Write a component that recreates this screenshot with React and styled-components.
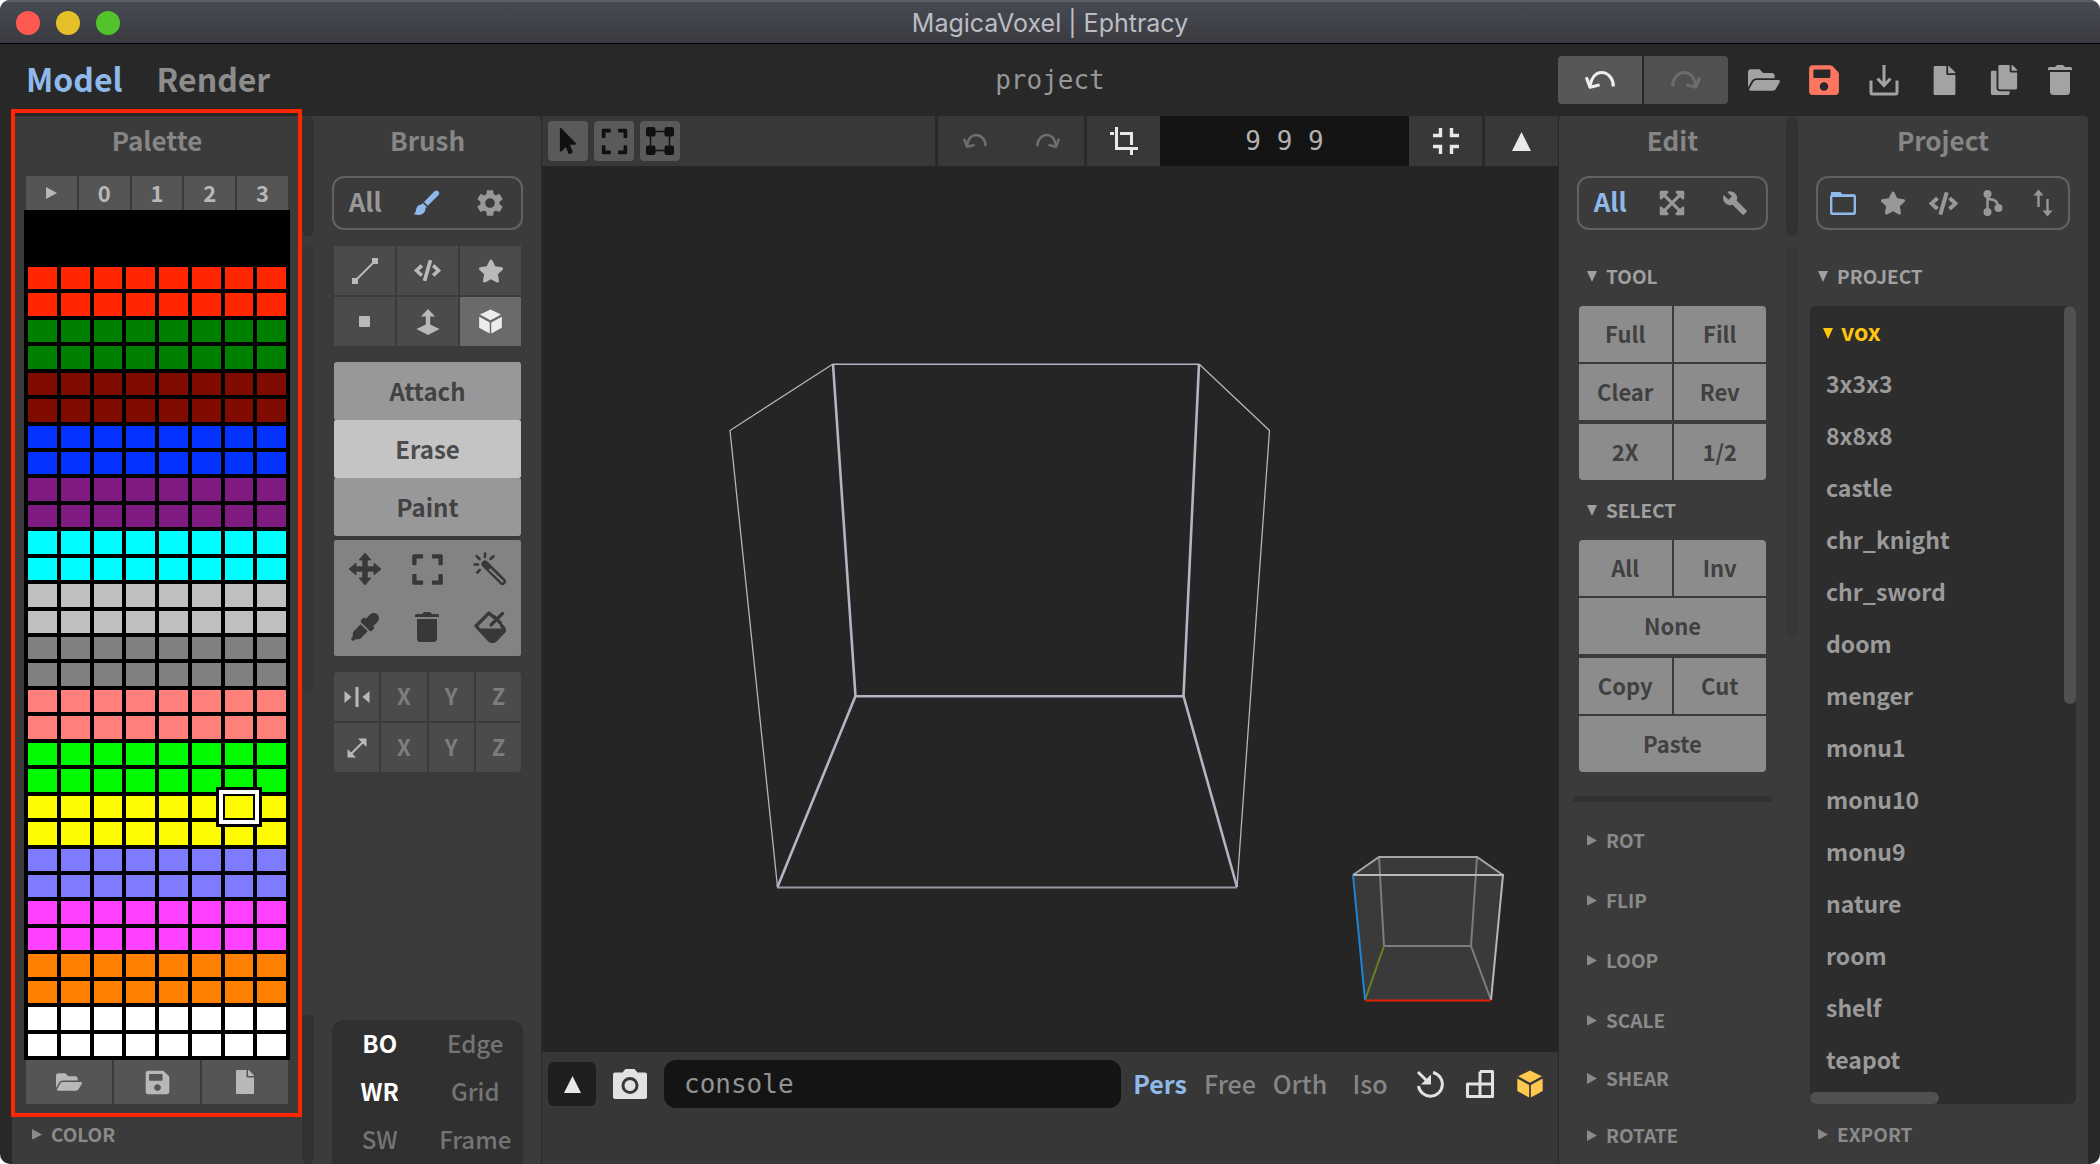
import React, { useState } from "react";
import styled, { createGlobalStyle, css } from "styled-components";
import {
  FaFolderOpen,
  FaSave,
  FaFile,
  FaCopy,
  FaMousePointer,
  FaExpand,
  FaCode,
  FaStar,
  FaEyeDropper,
  FaExpandArrowsAlt,
} from "react-icons/fa";
import { MdSettings, MdBuild } from "react-icons/md";

const SANS = `"Noto Sans CJK SC", "Open Sans", sans-serif`;
const MONO = `"DejaVu Sans Mono", "Liberation Mono", monospace`;

const GlobalStyle = createGlobalStyle`
  *, *::before, *::after { box-sizing: border-box; }
  body { margin: 0; background: #fff; }
  button, input { font: inherit; color: inherit; margin: 0; padding: 0; border: 0; background: none; }
  h1, h2, ul { margin: 0; padding: 0; font: inherit; list-style: none; }
  svg { display: block; flex: none; }
`;

/* ---------- window ---------- */

const Window = styled.div`
  display: flex;
  flex-direction: column;
  min-height: 100vh;
  border-radius: 10px;
  overflow: hidden;
  background: #282828;
  color: #8c8c8c;
  font-family: ${SANS};
  font-weight: 700;
  font-size: 22px;
`;

const TitleBar = styled.div`
  display: grid;
  grid-template-columns: 1fr auto 1fr;
  align-items: center;
  height: 44px;
  padding: 0 16px;
  background: linear-gradient(#474a53, #3a3b40);
  border-top: 2px solid #5c5f68;
  border-bottom: 1px solid #000;
`;

const Lights = styled.div`
  display: flex;
  gap: 16px;
`;

const Light = styled.button`
  width: 24px;
  height: 24px;
  border-radius: 50%;
  background: ${(p) => p.$color};
`;

const WindowTitle = styled.h1`
  font: 400 25px/40px Inter, Roboto, sans-serif;
  color: #bcbdc3;
`;

const Header = styled.header`
  display: grid;
  grid-template-columns: 1fr auto 1fr;
  align-items: center;
  height: 72px;
  padding: 0 14px;
`;

const Modes = styled.nav`
  display: flex;
  gap: 34px;
  padding-left: 12px;
`;

const ModeButton = styled.button`
  height: 48px;
  padding-bottom: 4px;
  font-size: 32px;
  line-height: 44px;
  color: ${(p) => (p.$active ? "#8fb9ea" : "#8c8c8c")};
`;

const ProjectName = styled.div`
  font: 400 26px/48px ${MONO};
  color: #969696;
`;

const HeaderTools = styled.div`
  display: flex;
  justify-content: flex-end;
  align-items: center;
`;

const History = styled.div`
  display: flex;
  gap: 2px;
  margin-right: 6px;
  border-radius: 4px;
  overflow: hidden;
`;

const HistoryButton = styled.button`
  display: grid;
  place-items: center;
  width: 84px;
  height: 48px;
  background: ${(p) => (p.$enabled ? "#575757" : "#505050")};
  color: ${(p) => (p.$enabled ? "#ededed" : "#6c6c6c")};
`;

const IconButton = styled.button`
  display: grid;
  place-items: center;
  width: ${(p) => p.$w || 60}px;
  height: 48px;
  color: ${(p) => p.$color || "#a3a3a3"};
`;

const Body = styled.main`
  flex: 1;
  display: flex;
  gap: 1px;
  padding: 0 12px;
`;

const Dock = styled.div`
  display: flex;
  flex: none;
  background: #3b3b3b;
  border-radius: 4px 4px 0 0;
`;

/* ---------- scroll tracks between panels ---------- */

const Track = styled.div`
  display: flex;
  flex-direction: column;
  gap: 10px;
  width: 12px;
`;

const TrackPart = styled.div`
  height: ${(p) => p.$h}px;
  border-radius: 6px;
  background: ${(p) => (p.$dim ? "#373737" : "#323232")};
  ${(p) => p.$end && css`margin-top: auto;`}
`;

/* ---------- panels ---------- */

const Panel = styled.section`
  position: relative;
  display: flex;
  flex-direction: column;
  width: ${(p) => p.$w}px;
  padding: 0 ${(p) => p.$pad}px;
`;

const PanelTitle = styled.h2`
  height: 60px;
  font-size: 26px;
  line-height: 48px;
  text-align: center;
  color: #868686;
`;

const Pill = styled.div`
  display: flex;
  height: 54px;
  margin: 0 ${(p) => p.$inset}px 16px;
  padding: 0 ${(p) => p.$pad || 0}px;
  border: 2px solid #626262;
  border-radius: 12px;
`;

const PillTab = styled.button`
  flex: 1;
  display: grid;
  place-items: center;
  padding-bottom: ${(p) => (p.$text ? 4 : 0)}px;
  font-size: 26px;
  line-height: 40px;
  color: ${(p) => (p.$active ? "#8fb9ea" : "#989898")};
`;

const Fold = styled.button`
  display: flex;
  align-items: center;
  gap: 9px;
  height: ${(p) => p.$h || 60}px;
  padding: 0 8px;
  font-size: 19px;
  color: ${(p) => (p.$open ? "#a0a0a0" : "#8a8a8a")};
`;

const FoldLabel = styled.span`
  padding-bottom: 2px;
`;

/* palette */

const PaletteSection = styled.div`
  position: relative;
  margin: 0 -12px;
  padding: 0 12px 13px;

  &::after {
    content: "";
    position: absolute;
    inset: -7px 0 0 -1px;
    border: 4px solid #ff2600;
    pointer-events: none;
  }
`;

const CellRow = styled.div`
  display: grid;
  grid-template-columns: repeat(${(p) => p.$cols}, 1fr);
  gap: 2px;
  height: ${(p) => p.$h}px;
  padding: 0 2px;
`;

const Cell = styled.button`
  display: grid;
  place-items: center;
  padding-bottom: ${(p) => (p.$text ? 3 : 0)}px;
  background: #555;
  color: #b8b8b8;
  line-height: 28px;
`;

const Swatches = styled.div`
  display: grid;
  grid-template-columns: repeat(8, 1fr);
  grid-template-rows: repeat(32, 1fr);
  gap: 4px;
  height: 850px;
  padding: 4px;
  background: #000;
`;

const Swatch = styled.button`
  background: ${(p) => p.$color};
  ${(p) =>
    p.$selected &&
    css`
      position: relative;
      box-shadow: 0 0 0 2px #000, 0 0 0 6px #fff, 0 0 0 9px #000;
    `}
`;

/* brush */

const ButtonGrid = styled.div`
  display: grid;
  grid-template-columns: repeat(${(p) => p.$cols}, 1fr);
  grid-auto-rows: ${(p) => p.$row}px;
  gap: ${(p) => (p.$gap === undefined ? 2 : p.$gap)}px;
  margin-bottom: ${(p) => p.$after || 0}px;
  border-radius: ${(p) => p.$radius || "0"};
  overflow: hidden;
`;

const ToolCell = styled.button`
  display: grid;
  place-items: center;
  padding-bottom: ${(p) => (p.$dim ? 3 : 0)}px;
  background: ${(p) => (p.$active ? "#6a6a6a" : "#4b4b4b")};
  color: ${(p) => (p.$active ? "#ececec" : p.$dim ? "#7d7d7d" : "#b9b9b9")};
  line-height: 40px;
`;

const ModeRow = styled.button`
  padding-bottom: 2px;
  font-size: 24px;
  background: ${(p) => (p.$active ? "#c4c4c4" : "#98989a")};
  color: ${(p) => (p.$active ? "#4c4c4c" : "#424242")};
  border-radius: 2px;
`;

const PickCell = styled.button`
  display: grid;
  place-items: center;
  background: #838385;
  color: #383838;
`;

const ViewOptions = styled.div`
  display: grid;
  grid-template-columns: 1fr 1fr;
  grid-auto-rows: 48px;
  margin: auto -2px 0;
  background: #303030;
  border-radius: 12px 12px 0 0;
`;

const ViewOption = styled.button`
  padding-bottom: 3px;
  font-size: 24px;
  font-weight: ${(p) => (p.$on ? 700 : 500)};
  color: ${(p) => (p.$on ? "#fff" : "#747474")};
`;

/* edit */

const ActionButton = styled.button`
  grid-column: span ${(p) => p.$span || 1};
  padding-bottom: 3px;
  background: #8c8c8c;
  color: #404040;
`;

const Divider = styled.hr`
  width: 100%;
  height: 6px;
  margin: 24px 0 8px;
  border: 0;
  background: #323232;
  box-shadow: -6px 0 #323232, 6px 0 #323232;
`;

/* project */

const FileBox = styled.div`
  display: grid;
  grid-template-columns: 1fr 12px;
  grid-template-rows: 1fr 12px;
  height: 798px;
  border-radius: 6px;
  overflow: hidden;
  background: #2d2d2d;
`;

const FileList = styled.ul`
  padding: 1px 0 0;
`;

const FileButton = styled.button`
  display: flex;
  align-items: center;
  gap: 8px;
  width: 100%;
  height: 52px;
  padding-left: ${(p) => (p.$folder ? 13 : 16)}px;
  font-size: 23px;
  color: ${(p) => (p.$folder ? "#ffc40c" : "#9a9a9a")};
`;

const FileLabel = styled.span`
  padding-bottom: 4px;
`;

const Thumb = styled.div`
  width: ${(p) => (p.$vertical ? "12px" : "129px")};
  height: ${(p) => (p.$vertical ? "398px" : "12px")};
  border-radius: 6px;
  background: #505050;
`;

/* ---------- centre ---------- */

const Center = styled.section`
  flex: 1;
  min-width: 0;
  display: flex;
  flex-direction: column;
  background: #252525;
`;

const Toolbar = styled.div`
  display: flex;
  gap: 3px;
  height: 50px;
  background: #292929;
`;

const ToolGroup = styled.div`
  display: flex;
  align-items: center;
  gap: ${(p) => p.$gap || 0}px;
  padding-left: ${(p) => p.$pad || 0}px;
  background: #383838;
  ${(p) => p.$grow && css`flex: 1;`}
`;

const SquareTool = styled.button`
  display: grid;
  place-items: center;
  width: 40px;
  height: 40px;
  border-radius: 4px;
  background: #5a5a5a;
  color: #101010;
`;

const SizeInput = styled.input`
  width: 249px;
  height: 50px;
  text-align: center;
  font: 400 26px ${MONO};
  color: #b2b2b2;
  background: #141414;
`;

const Scene = styled.svg`
  width: 100%;
  height: auto;
`;

const BottomBar = styled.footer`
  flex: 1;
  display: flex;
  align-items: flex-start;
  padding: 8px 3px 0 6px;
  background: #373737;
`;

const UpButton = styled.button`
  display: grid;
  place-items: center;
  width: 48px;
  height: 44px;
  margin: 2px 0;
  border-radius: 6px;
  background: #1e1e1e;
  color: #e8e8e8;
`;

const Console = styled.input`
  flex: 1;
  min-width: 0;
  height: 48px;
  margin-right: 4px;
  padding: 0 20px;
  border-radius: 12px;
  font: 400 26px ${MONO};
  color: #929292;
  background: #141414;
  &::placeholder { color: #929292; opacity: 1; }
`;

const CameraMode = styled.button`
  width: 70px;
  height: 48px;
  padding-bottom: 3px;
  font-size: 25px;
  font-weight: ${(p) => (p.$active ? 700 : 500)};
  color: ${(p) => (p.$active ? "#8fb9ea" : "#868686")};
`;

/* ---------- icons ---------- */

const Svg = ({ w = 24, h = w, box, children, ...rest }) => (
  <svg width={w} height={h} viewBox={box || "0 0 24 24"} fill="none" stroke="currentColor" aria-hidden="true" {...rest}>
    {children}
  </svg>
);
const Solid = (props) => <Svg {...props} fill="currentColor" stroke="none" />;

const Undo = ({ w = 30, flip }) => (
  <Svg w={w} h={(w * 20) / 30} box="0 0 30 20" strokeWidth="3.2" strokeLinecap="round" strokeLinejoin="round">
    <g transform={flip ? "matrix(-1 0 0 1 30 0)" : undefined}>
      <path d="M28.2 16.5C28.6 8 22.500 2.500 16.500 2.500C10.500 2.500 6.500 8 5.200 15.500" strokeLinecap="butt" />
      <path d="M1.800 8.500L5 17.200L13.200 15.200" />
    </g>
  </Svg>
);
const RightArrow = ({ w = 11 }) => (
  <Solid w={w} h={(w * 12) / 11} box="0 0 11 12"><path d="M0 0L11 6L0 12Z" /></Solid>
);
const DownArrow = ({ w = 10 }) => (
  <Solid w={w} h={11} box="0 0 10 11"><path d="M0 0H10L5 11Z" /></Solid>
);
const UpArrow = ({ w = 19 }) => (
  <Solid w={w}><path d="M12 0L24 24H0Z" /></Solid>
);
const Download = () => (
  <Svg w={32} box="0 0 32 32" strokeWidth="3">
    <path d="M3 16.500V28.500Q3 30 4.500 30H27.500Q29 30 29 28.500V16.500" />
    <path d="M16 1V21M9.500 14.500L16 21.500L22.500 14.500" />
  </Svg>
);
const Trash = ({ w = 24, h = 30 }) => (
  <Solid w={w} h={h} box="0 0 24 30">
    <path d="M1.500 2H7L9 0H15L17 2H22.500Q24 2 24 3.500V5H0V3.500Q0 2 1.500 2Z" />
    <path d="M2 7H22V26.500Q22 30 18.500 30H5.500Q2 30 2 26.500Z" />
  </Solid>
);
const Brush = () => (
  <Solid w={26} box="0 0 26 26">
    <path d="M20.500 1.200Q22.300 -0.300 24.300 1.200Q26 3 24.600 5L13.800 15.800L10 12Z" />
    <path d="M8.800 13L12.800 17L11.600 18.300Q11.300 24 5.500 25Q2.500 25.300 0 24Q2 22.500 2 20Q2.800 15 7.400 14.600Z" />
  </Solid>
);
const LineTool = () => (
  <Svg w={28} box="0 0 28 28" strokeWidth="2">
    <path d="M4 24L24 4" />
    <path d="M1 21H7V27H1ZM21 1H27V7H21Z" fill="currentColor" stroke="none" />
  </Svg>
);
const Dot = () => <Solid w={11} box="0 0 11 11"><rect width="11" height="11" rx="1" /></Solid>;
const Extrude = () => (
  <Solid w={24} h={26} box="0 0 24 26">
    <path d="M12 0L19 7.500H14.200V15.500L23.500 20L12 26L0.500 20L9.800 15.500V7.500H5Z" />
  </Solid>
);
const Move = () => (
  <Solid w={32} box="0 0 32 32">
    <path d="M16 0L22 7H18.300V13.700H25V10L32 16L25 22V18.300H18.300V25H22L16 32L10 25H13.700V18.300H7V22L0 16L7 10V13.700H13.700V7H10Z" stroke="currentColor" strokeLinejoin="round" strokeWidth="0.800" />
  </Solid>
);
const Cube = ({ w = 26 }) => (
  <Solid w={w} box="0 0 26 26">
    <path d="M13 0.500L24 5.800L13 11.800L2 5.800Z" />
    <path d="M1.200 8L12.200 14V25.500L1.200 19.500Z" />
    <path d="M24.800 8L13.800 14V25.500L24.800 19.500Z" />
  </Solid>
);
const Wand = () => (
  <Svg w={34} box="0 0 34 34" strokeLinecap="round">
    <path d="M12 12L29.500 29.500" strokeWidth="7" />
    <path d="M17 17.500L29.500 29.500" stroke="#838385" strokeWidth="2" />
    <path d="M12 1.500V5M3.700 4.200L6.500 7M20.500 4.200L17.500 7M1.500 12.500H5M4.300 20.500L6.700 18" strokeWidth="2.600" />
  </Svg>
);
const Bucket = () => (
  <Svg w={32} box="0 0 32 32" strokeLinejoin="round" strokeLinecap="round">
    <path d="M19.500 6L15 2L2 15L15 29Q18.500 32 22 29L30.500 20Q31 18 27.500 14.500" strokeWidth="3.200" />
    <path d="M3.500 18H30.500L21 29Q18.500 31 15.500 29Z" fill="currentColor" />
    <path d="M28.500 2.500L17 14M20.500 6L26.500 12" strokeWidth="3.200" />
  </Svg>
);
const Mirror = () => (
  <Solid w={26} h={20} box="0 0 26 20">
    <path d="M0.500 4L7.500 10L0.500 16ZM25.500 4L18.500 10L25.500 16Z" />
    <rect x="11.500" width="3" height="20" />
  </Solid>
);
const Diagonal = () => (
  <Svg w={20} box="0 0 20 20" strokeWidth="2">
    <path d="M4 16L16 4" />
    <path d="M11 0.500H19.500V9ZM0.500 11V19.500H9Z" fill="currentColor" stroke="none" />
  </Svg>
);
const VectorSquare = () => (
  <Svg w={28} box="0 0 28 28" strokeWidth="1.500">
    <rect x="4.500" y="4.500" width="19" height="19" />
    <g fill="currentColor" stroke="none">
      <rect width="9.500" height="9.500" rx="2" />
      <rect x="18.500" width="9.500" height="9.500" rx="2" />
      <rect y="18.500" width="9.500" height="9.500" rx="2" />
      <rect x="18.500" y="18.500" width="9.500" height="9.500" rx="2" />
    </g>
  </Svg>
);
const Crop = () => (
  <Svg w={28} box="0 0 28 28" strokeWidth="3">
    <path d="M6.500 0V21.500H28" />
    <path d="M0 6.500H4M10 6.500H21.500V18M21.500 23V28" />
  </Svg>
);
const Shrink = () => (
  <Svg w={26} box="0 0 26 26" strokeWidth="3.400">
    <path d="M0 7.500H7.500V0M26 7.500H18.500V0M0 18.500H7.500V26M26 18.500H18.500V26" />
  </Svg>
);
const Camera = () => (
  <Svg w={34} h={30} box="0 0 34 30">
    <path d="M2 3.500H9.500L12.500 0H21.500L24.500 3.500H32Q34 3.500 34 5.500V28Q34 30 32 30H2Q0 30 0 28V5.500Q0 3.500 2 3.500Z" fill="currentColor" stroke="none" />
    <circle cx="17" cy="16.500" r="7" stroke="#373737" strokeWidth="3" />
  </Svg>
);
const ResetView = () => (
  <Svg w={28} box="0 0 28 28" strokeWidth="3">
    <path d="M17 2.500A12 12 0 1 1 2.500 16" />
    <path d="M2 2L11 11" />
    <path d="M15 4.500V14.500H5Z" fill="currentColor" stroke="none" />
  </Svg>
);
const Blocks = () => (
  <Svg w={28} box="0 0 28 28" strokeWidth="3" strokeLinejoin="round">
    <path d="M1.500 14H26.500V26.500H1.500ZM14 1.500H26.500V14M14 1.500V26.500" />
  </Svg>
);
const FolderOutline = () => (
  <Svg w={26} h={24} box="0 0 26 24" strokeWidth="2.400" strokeLinejoin="round">
    <rect x="1.200" y="4.500" width="23.600" height="18.300" rx="1" />
    <path d="M1 1H10.500L12.500 3.500H25V6H1Z" fill="currentColor" stroke="none" />
  </Svg>
);
const Branch = () => (
  <Svg w={20} h={26} box="0 0 20 26" strokeWidth="2.400">
    <path d="M4.500 4V22M4.500 9Q15 9 15 17" />
    <g fill="currentColor" stroke="none">
      <circle cx="4.500" cy="4" r="4" />
      <circle cx="4.500" cy="22" r="4" />
      <circle cx="15.500" cy="18" r="4" />
    </g>
  </Svg>
);
const Swap = () => (
  <Svg w={20} h={28} box="0 0 20 28" strokeWidth="2.400">
    <path d="M5.500 4V18M14.500 10V24" />
    <path d="M0.500 6.500L5.500 0.500L10.500 6.500ZM9.500 21.500L14.500 27.500L19.500 21.500Z" fill="currentColor" stroke="none" />
  </Svg>
);

/* ---------- data ---------- */

const PALETTE = [
  "#000000", "#ff2600", "#008000", "#800b00", "#0433ff", "#7f1a80", "#00fdff", "#bfbfbf",
  "#808080", "#ff7f7b", "#00fb00", "#fffb00", "#7f7bff", "#ff40ff", "#ff8000", "#ffffff",
];

const FILES = [
  "3x3x3", "8x8x8", "castle", "chr_knight", "chr_sword", "doom", "menger",
  "monu1", "monu10", "monu9", "nature", "room", "shelf", "teapot",
];

const TOOL_ACTIONS = [["Full", "Fill", "Clear", "Rev"], ["2X", "1/2"]];

const VIEW_OPTIONS = ["BO", "Edge", "WR", "Grid", "SW", "Frame"];

/* ---------- parts ---------- */

function FoldHeader({ label, open, h }) {
  return (
    <Fold $open={open} $h={h} aria-expanded={!!open}>
      {open ? <DownArrow /> : <RightArrow w={10} />}
      <FoldLabel>{label}</FoldLabel>
    </Fold>
  );
}

function PalettePanel() {
  const [selected, setSelected] = useState(182);
  return (
    <Panel $w={290} $pad={12}>
      <PaletteSection>
        <PanelTitle>Palette</PanelTitle>
        <CellRow $cols={5} $h={34}>
          <Cell aria-label="Next palette"><RightArrow /></Cell>
          {[0, 1, 2, 3].map((n) => <Cell key={n} $text>{n}</Cell>)}
        </CellRow>
        <Swatches>
          {Array.from({ length: 256 }, (_, i) => (
            <Swatch
              key={i}
              aria-label={`Color ${i}`}
              $color={PALETTE[Math.floor(i / 16)]}
              $selected={i === selected}
              onClick={() => setSelected(i)}
            />
          ))}
        </Swatches>
        <CellRow $cols={3} $h={44}>
          <Cell aria-label="Open palette"><FaFolderOpen size={26} /></Cell>
          <Cell aria-label="Save palette"><FaSave size={27} /></Cell>
          <Cell aria-label="New palette"><FaFile size={24} /></Cell>
        </CellRow>
      </PaletteSection>
      <FoldHeader label="COLOR" h={34} />
    </Panel>
  );
}

function BrushPanel() {
  const [mode, setMode] = useState("Erase");
  return (
    <Panel $w={227} $pad={20}>
      <PanelTitle>Brush</PanelTitle>
      <Pill $inset={-2}>
        <PillTab $text>All</PillTab>
        <PillTab $active aria-label="Brush"><Brush /></PillTab>
        <PillTab aria-label="Settings"><MdSettings size={32} /></PillTab>
      </Pill>
      <ButtonGrid $cols={3} $row={49} $after={16}>
        <ToolCell aria-label="Line"><LineTool /></ToolCell>
        <ToolCell aria-label="Shader"><FaCode size={27} /></ToolCell>
        <ToolCell aria-label="Pattern"><FaStar size={26} /></ToolCell>
        <ToolCell aria-label="Voxel"><Dot /></ToolCell>
        <ToolCell aria-label="Face"><Extrude /></ToolCell>
        <ToolCell $active aria-label="Box"><Cube w={25} /></ToolCell>
      </ButtonGrid>
      <ButtonGrid $cols={1} $row={58} $gap={0} $after={4} $radius="2px">
        {["Attach", "Erase", "Paint"].map((m) => (
          <ModeRow key={m} $active={m === mode} onClick={() => setMode(m)}>{m}</ModeRow>
        ))}
      </ButtonGrid>
      <ButtonGrid $cols={3} $row={58} $gap={0} $after={16} $radius="2px">
        <PickCell aria-label="Move"><Move /></PickCell>
        <PickCell aria-label="Select"><FaExpand size={35} /></PickCell>
        <PickCell aria-label="Magic wand"><Wand /></PickCell>
        <PickCell aria-label="Pick color"><FaEyeDropper size={28} /></PickCell>
        <PickCell aria-label="Remove"><Trash /></PickCell>
        <PickCell aria-label="Fill"><Bucket /></PickCell>
      </ButtonGrid>
      <ButtonGrid $cols={4} $row={49} $radius="4px">
        <ToolCell aria-label="Mirror"><Mirror /></ToolCell>
        {["X", "Y", "Z"].map((a) => <ToolCell key={a} $dim>{a}</ToolCell>)}
        <ToolCell aria-label="Axis"><Diagonal /></ToolCell>
        {["X", "Y", "Z"].map((a) => <ToolCell key={a} $dim>{a}</ToolCell>)}
      </ButtonGrid>
      <ViewOptions>
        {VIEW_OPTIONS.map((o) => <ViewOption key={o} $on={o === "BO" || o === "WR"}>{o}</ViewOption>)}
      </ViewOptions>
    </Panel>
  );
}

function EditPanel() {
  return (
    <Panel $w={227} $pad={20}>
      <PanelTitle>Edit</PanelTitle>
      <Pill $inset={-2}>
        <PillTab $active $text>All</PillTab>
        <PillTab aria-label="Transform"><FaExpandArrowsAlt size={28} /></PillTab>
        <PillTab aria-label="Tools"><MdBuild size={26} /></PillTab>
      </Pill>
      <FoldHeader label="TOOL" open />
      <ButtonGrid $cols={2} $row={56} $after={4} $radius="4px 4px 0 0">
        {TOOL_ACTIONS[0].map((a) => <ActionButton key={a}>{a}</ActionButton>)}
      </ButtonGrid>
      <ButtonGrid $cols={2} $row={56} $radius="0 0 4px 4px">
        {TOOL_ACTIONS[1].map((a) => <ActionButton key={a}>{a}</ActionButton>)}
      </ButtonGrid>
      <FoldHeader label="SELECT" open />
      <ButtonGrid $cols={2} $row={56} $after={4} $radius="4px 4px 0 0">
        <ActionButton>All</ActionButton>
        <ActionButton>Inv</ActionButton>
        <ActionButton $span={2}>None</ActionButton>
      </ButtonGrid>
      <ButtonGrid $cols={2} $row={56} $radius="0 0 4px 4px">
        <ActionButton>Copy</ActionButton>
        <ActionButton>Cut</ActionButton>
        <ActionButton $span={2}>Paste</ActionButton>
      </ButtonGrid>
      <Divider />
      {["ROT", "FLIP", "LOOP", "SCALE"].map((l) => <FoldHeader key={l} label={l} />)}
      {["SHEAR", "ROTATE"].map((l) => <FoldHeader key={l} label={l} h={57} />)}
    </Panel>
  );
}

function ProjectPanel() {
  return (
    <Panel $w={290} $pad={12}>
      <PanelTitle>Project</PanelTitle>
      <Pill $inset={6}>
        <PillTab $active aria-label="Files"><FolderOutline /></PillTab>
        <PillTab aria-label="Favorites"><FaStar size={26} /></PillTab>
        <PillTab aria-label="Shaders"><FaCode size={29} /></PillTab>
        <PillTab aria-label="Branches"><Branch /></PillTab>
        <PillTab aria-label="Transfer"><Swap /></PillTab>
      </Pill>
      <FoldHeader label="PROJECT" open />
      <FileBox>
        <FileList>
          <li><FileButton $folder><DownArrow /><FileLabel>vox</FileLabel></FileButton></li>
          {FILES.map((f) => <li key={f}><FileButton><FileLabel>{f}</FileLabel></FileButton></li>)}
        </FileList>
        <Thumb $vertical />
        <Thumb />
      </FileBox>
      <FoldHeader label="EXPORT" h={60} />
    </Panel>
  );
}

function SceneView() {
  return (
    <Scene viewBox="542 166 1016 886" fill="none" role="img" aria-label="Model view">
      <g stroke="#b5b4c2" strokeLinejoin="round">
        <path strokeWidth="1.300" d="M833 364L730 430.500L777.500 887M1199 364L1269.500 430.500L1237 887" />
        <path strokeWidth="1.600" d="M833 364.200H1199" />
        <path strokeWidth="1.800" stroke="#9797a2" d="M777 887.500H1237" />
        <path strokeWidth="2.600" d="M833 364L855.500 696.300H1183.500L1199 364M855.500 696L777.500 887M1237 887L1183.500 696" />
      </g>
      <path fill="#3a3a3a" d="M1353 875L1379 857H1477L1503 875L1491 1000H1365Z" />
      <g strokeWidth="2">
        <path stroke="#7d7d7d" d="M1379 857L1384 946H1471L1477 857M1471 946L1491 1000" />
        <path stroke="#6a8022" d="M1384 946L1365 1000" />
        <path stroke="#a5a5a5" d="M1353 875L1379 857H1477L1503 875" />
        <path stroke="#b8b8b8" d="M1353 875H1503L1491 1000" />
        <path stroke="#1c85d8" d="M1353 875L1365 1000" />
        <path stroke="#e02000" d="M1365 1000.500H1491" />
      </g>
    </Scene>
  );
}

export default function App() {
  const [camera, setCamera] = useState("Pers");
  return (
    <>
      <GlobalStyle />
      <Window>
        <TitleBar>
          <Lights>
            <Light $color="#ff5a52" aria-label="Close" />
            <Light $color="#e6c029" aria-label="Minimize" />
            <Light $color="#54c22b" aria-label="Zoom" />
          </Lights>
          <WindowTitle>MagicaVoxel | Ephtracy</WindowTitle>
        </TitleBar>
        <Header>
          <Modes>
            <ModeButton $active>Model</ModeButton>
            <ModeButton>Render</ModeButton>
          </Modes>
          <ProjectName>project</ProjectName>
          <HeaderTools>
            <History>
              <HistoryButton $enabled aria-label="Undo"><Undo /></HistoryButton>
              <HistoryButton aria-label="Redo"><Undo flip /></HistoryButton>
            </History>
            <IconButton aria-label="Open"><FaFolderOpen size={32} /></IconButton>
            <IconButton aria-label="Save" $color="#ff7660"><FaSave size={34} /></IconButton>
            <IconButton aria-label="Import"><Download /></IconButton>
            <IconButton aria-label="New"><FaFile size={29} /></IconButton>
            <IconButton aria-label="Duplicate"><FaCopy size={30} /></IconButton>
            <IconButton $w={52} aria-label="Delete"><Trash /></IconButton>
          </HeaderTools>
        </Header>
        <Body>
          <Dock>
            <PalettePanel />
            <Track>
              <TrackPart $h={120} />
              <TrackPart $h={447} $dim />
              <TrackPart $h={150} $end />
            </Track>
            <BrushPanel />
          </Dock>
          <Center>
            <Toolbar>
              <ToolGroup $grow $gap={6} $pad={6}>
                <SquareTool aria-label="Pointer"><FaMousePointer size={26} /></SquareTool>
                <SquareTool aria-label="Frame"><FaExpand size={29} /></SquareTool>
                <SquareTool aria-label="Bounds"><VectorSquare /></SquareTool>
              </ToolGroup>
              <ToolGroup>
                <IconButton $w={73} $color="#6e6e6e" aria-label="Undo edit"><Undo w={24} /></IconButton>
                <IconButton $w={73} $color="#6e6e6e" aria-label="Redo edit"><Undo w={24} flip /></IconButton>
              </ToolGroup>
              <ToolGroup>
                <IconButton $w={73} $color="#e8e8e8" aria-label="Crop"><Crop /></IconButton>
                <SizeInput aria-label="Model size" defaultValue="9 9 9" />
                <IconButton $w={73} $color="#e8e8e8" aria-label="Fit"><Shrink /></IconButton>
              </ToolGroup>
              <ToolGroup>
                <IconButton $w={73} $color="#e8e8e8" aria-label="Collapse"><UpArrow /></IconButton>
              </ToolGroup>
            </Toolbar>
            <SceneView />
            <BottomBar>
              <UpButton aria-label="Expand console"><UpArrow w={17} /></UpButton>
              <IconButton $w={68} $color="#e2e2e2" aria-label="Screenshot"><Camera /></IconButton>
              <Console aria-label="Console" placeholder="console" />
              {["Pers", "Free", "Orth", "Iso"].map((c) => (
                <CameraMode key={c} $active={c === camera} onClick={() => setCamera(c)}>{c}</CameraMode>
              ))}
              <IconButton $w={50} $color="#e2e2e2" aria-label="Reset view"><ResetView /></IconButton>
              <IconButton $w={50} $color="#e2e2e2" aria-label="Blocks"><Blocks /></IconButton>
              <IconButton $w={50} $color="#ffc84e" aria-label="Cube view"><Cube w={28} /></IconButton>
            </BottomBar>
          </Center>
          <Dock>
            <EditPanel />
            <Track>
              <TrackPart $h={120} />
              <TrackPart $h={391} $dim />
            </Track>
            <ProjectPanel />
          </Dock>
        </Body>
      </Window>
    </>
  );
}
